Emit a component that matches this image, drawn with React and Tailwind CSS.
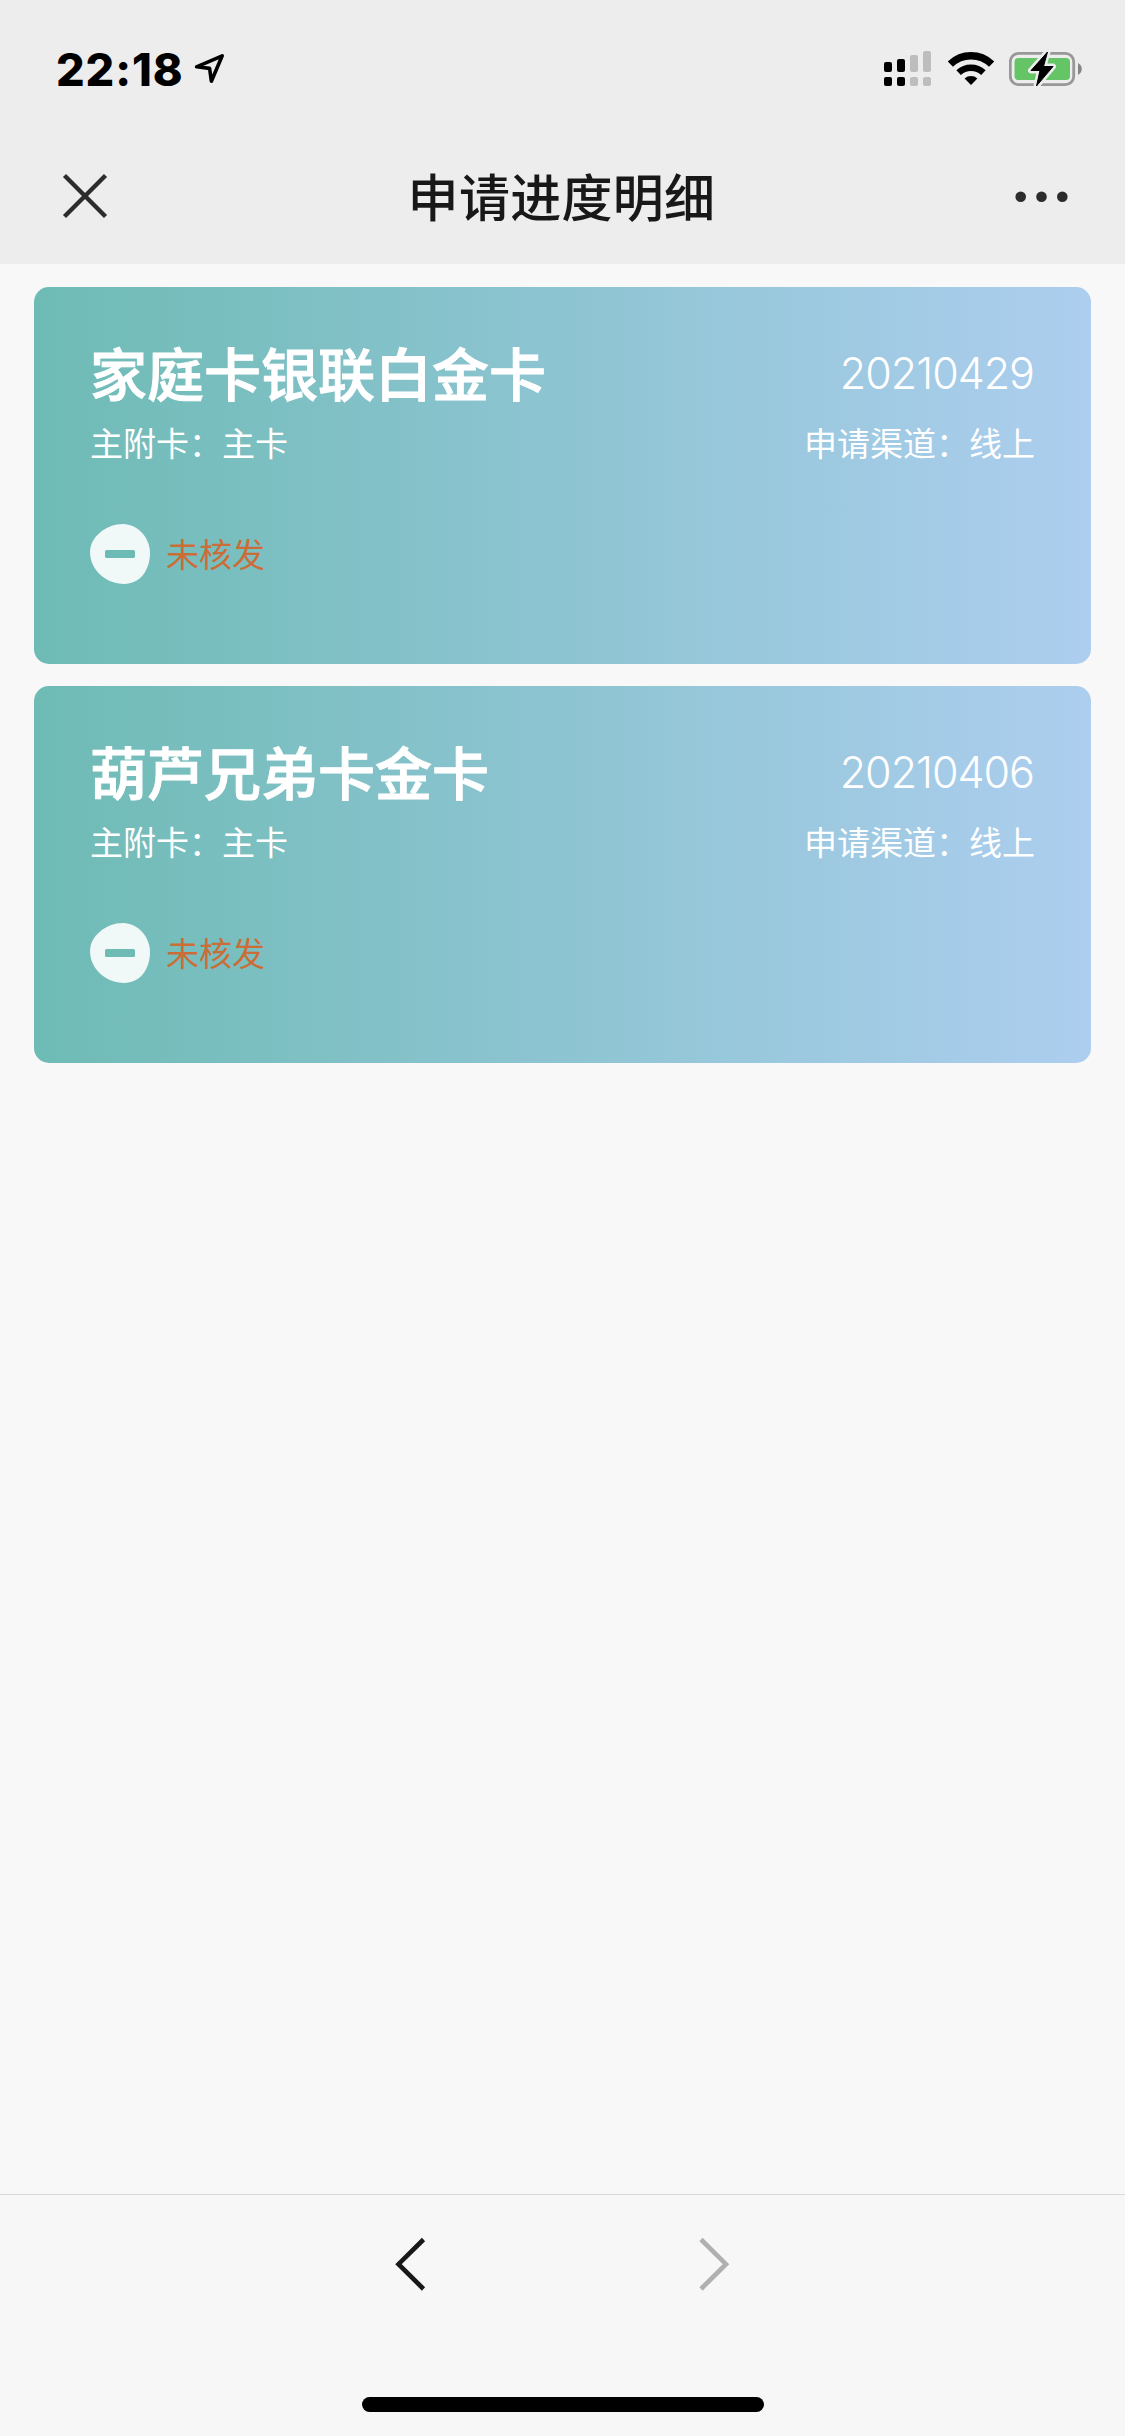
const cards = [
  { name: "家庭卡银联白金卡", date: "20210429" },
  { name: "葫芦兄弟卡金卡", date: "20210406" },
];

function LocationIcon() {
  return (
    <svg className="ml-[10px] h-8 w-8" viewBox="194 53 32 32" fill="none" stroke="#000" strokeWidth="3.6" strokeLinejoin="round">
      <path d="M196.6 66.8 L222.2 55.8 L211.4 81.2 L209.6 68.4 Z" />
    </svg>
  );
}

function Signal() {
  return (
    <svg className="h-9 w-12" viewBox="884 52 48 36">
      <g fill="#000">
        <rect x="884" y="63" width="8" height="10" rx="2" />
        <rect x="897" y="60" width="8" height="13" rx="2" />
        <rect x="884" y="78" width="8" height="9" rx="2" />
        <rect x="897" y="78" width="8" height="9" rx="2" />
      </g>
      <g fill="#bdbdbd">
        <rect x="910" y="56" width="8" height="17" rx="2" />
        <rect x="923" y="52" width="8" height="21" rx="2" />
        <rect x="910" y="78" width="8" height="9" rx="2" />
        <rect x="923" y="78" width="8" height="9" rx="2" />
      </g>
    </svg>
  );
}

function Wifi() {
  return (
    <svg className="ml-4 h-9 w-[46px]" viewBox="948 51 46 36">
      <g fill="none" stroke="#000">
        <path d="M950.4 64.2 A29.5 29.5 0 0 1 991.6 64.2" strokeWidth="7.4" />
        <path d="M958.6 72.6 A18.2 18.2 0 0 1 983.4 72.6" strokeWidth="6.6" />
      </g>
      <path d="M964.6 78.500 A9.8 9.8 0 0 1 977.4 78.500 L971 85 Z" fill="#000" />
    </svg>
  );
}

function Battery() {
  return (
    <svg className="ml-[15px] h-9 w-[74px]" viewBox="1009 51 74 36">
      <rect x="1010.3" y="53.3" width="63.4" height="31.4" rx="8.5" fill="none" stroke="#989898" strokeWidth="2.8" />
      <path d="M1078 63 C1083 65.500 1083 72.500 1078 75 Z" fill="#858585" />
      <rect x="1014.500" y="58" width="55.500" height="22" rx="4" fill="#65c566" />
      <path d="M1047.500 52 L1031 70.500 H1040 L1036.500 86 L1053 66.500 H1043.500 Z" fill="#000" stroke="#ededed" strokeWidth="6" strokeLinejoin="round" />
      <path d="M1047.500 52 L1031 70.500 H1040 L1036.500 86 L1053 66.500 H1043.500 Z" fill="#000" stroke="#000" strokeWidth="1" strokeLinejoin="round" />
    </svg>
  );
}

function Header() {
  return (
    <header className="h-[264px] bg-[#ededed]">
      <div className="flex h-[138px] items-center justify-between pr-[42px] pl-14">
        <div className="flex items-center">
          <span className="font-[Inter] text-[45px] leading-none font-extrabold tracking-[0.9px] text-black">22:18</span>
          <LocationIcon />
        </div>
        <div className="flex items-center">
          <Signal />
          <Wifi />
          <Battery />
        </div>
      </div>
      <div className="flex h-[116px] items-center justify-between px-[57px]">
        <svg className="h-14 w-14" viewBox="57 168 56 56" fill="none" stroke="#2c2c2c" strokeWidth="4.4">
          <path d="M64.500 175.500 L105.500 216.500 M105.500 175.500 L64.500 216.500" />
        </svg>
        <h1 className="mr-0.5 mb-0.5 text-[51px] leading-none font-medium tracking-[0.3px] text-[#181818]">申请进度明细</h1>
        <svg className="h-14 w-14" viewBox="1012 168 56 56" fill="#2c2c2c">
          <circle cx="1020.7" cy="196.7" r="5.300" />
          <circle cx="1041.500" cy="196.7" r="5.300" />
          <circle cx="1062.300" cy="196.7" r="5.300" />
        </svg>
      </div>
    </header>
  );
}

function Card({ name, date }) {
  return (
    <article className="h-[376.500px] rounded-[15px] bg-[linear-gradient(90deg,#6ebbb5,#adceef)] px-14 pt-[52px] text-white">
      <div className="flex h-16 items-center justify-between">
        <h2 className="text-[57px] leading-none font-medium [-webkit-text-stroke:1px_white]">{name}</h2>
        <span className="mt-[5px] mr-px font-[Inter] text-[43px] leading-none font-light tracking-[-1px]">{date}</span>
      </div>
      <div className="mt-[15px] flex h-12 items-center justify-between text-[33px] leading-none font-normal">
        <span>主附卡：主卡</span>
        <span>申请渠道：线上</span>
      </div>
      <div className="mt-[58px] flex h-[60px] items-center gap-4">
        <svg className="h-[60px] w-[60px]" viewBox="0 0 60 60">
          <path d="M33 0 C48 0 60 14 60 29 C60 46 50 60 34 60 C16 60 0 46 0 28 C0 13 16 0 33 0 Z" fill="#f0f8f8" />
          <rect x="15" y="26" width="30" height="8" rx="1.500" fill="#6ebbb5" />
        </svg>
        <span className="mb-0.5 text-[33px] leading-none font-normal text-[#cb6d36]">未核发</span>
      </div>
    </article>
  );
}

export default function App() {
  return (
    <div className="flex h-[2436px] w-[1125px] flex-col bg-[#f8f8f8] font-['Noto_Sans_CJK_SC',sans-serif]">
      <Header />
      <main className="flex flex-1 flex-col gap-[22.500px] px-[34px] pt-[23px]">
        {cards.map((card) => (
          <Card key={card.date} {...card} />
        ))}
      </main>
      <footer className="flex h-[242px] flex-col items-center border-t border-[#d9d9d9] bg-[#f7f7f7]">
        <div className="flex h-[138px] w-[335px] items-center justify-between">
          <svg className="h-14 w-8" viewBox="395 2236 32 56" fill="none" stroke="#181818" strokeWidth="4.600">
            <path d="M423.500 2239.500 L398.500 2264.200 L423.500 2289" />
          </svg>
          <svg className="h-14 w-8" viewBox="698 2236 32 56" fill="none" stroke="#b0b0b0" strokeWidth="4.600">
            <path d="M701 2239.500 L726 2264.200 L701 2289" />
          </svg>
        </div>
        <div className="mt-16 h-[15px] w-[402px] rounded-full bg-black" />
      </footer>
    </div>
  );
}
